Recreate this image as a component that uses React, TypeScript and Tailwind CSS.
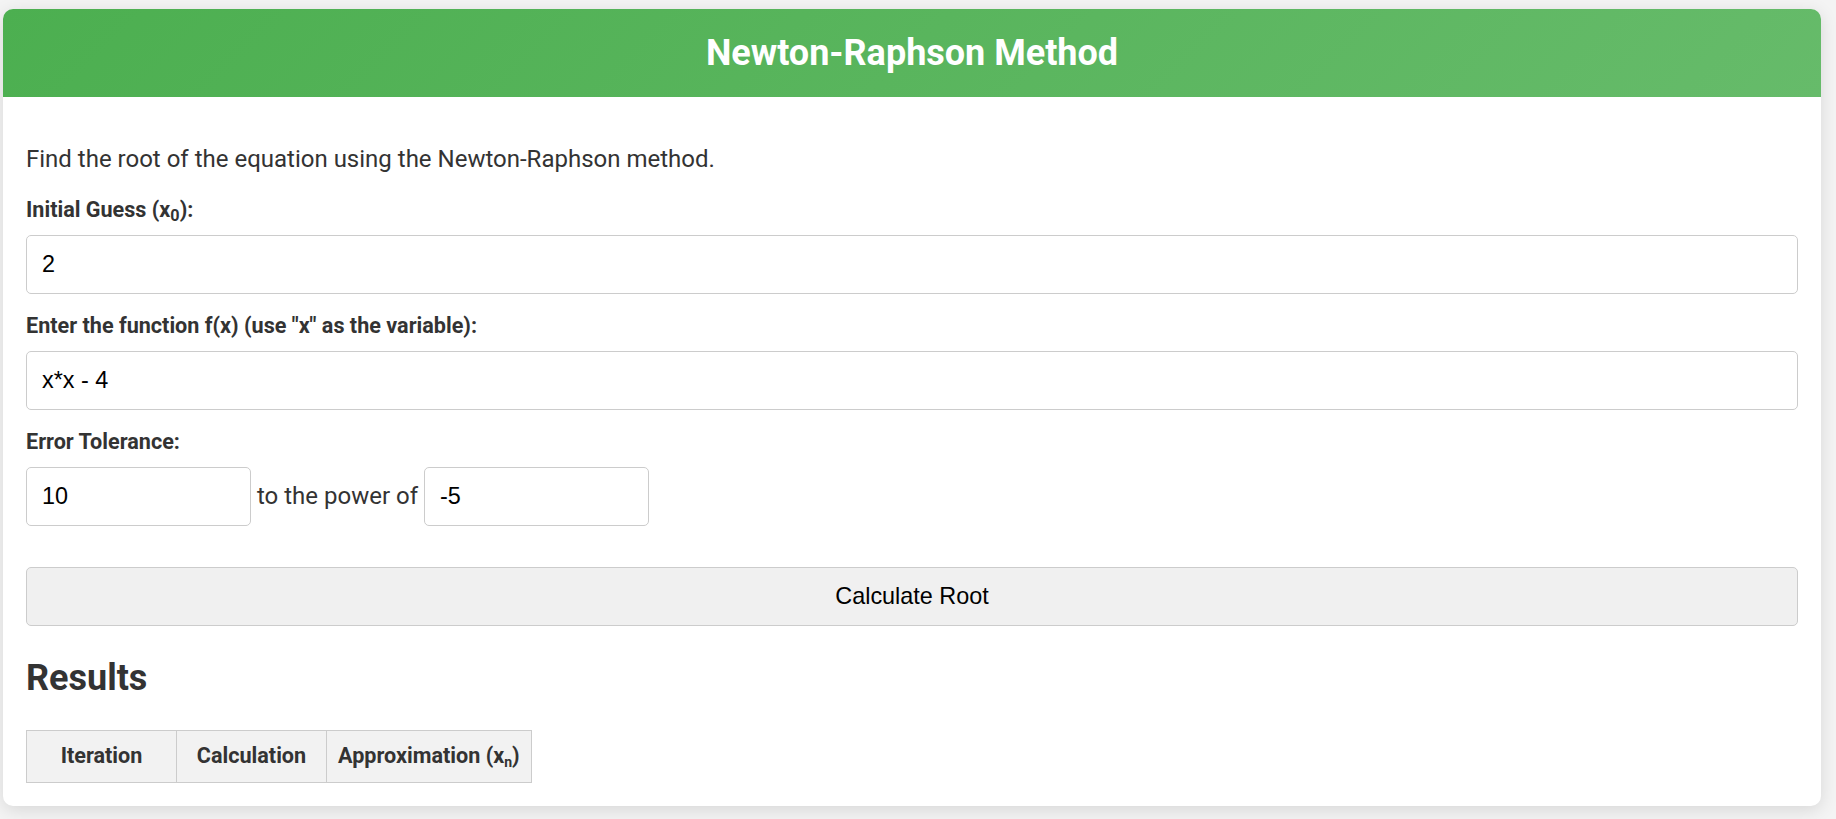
const fieldClass =
  "block w-full h-[58.5px] px-[15px] border border-[#cccccc] rounded-[5px] bg-white text-black text-[23.4px] font-['Liberation_Sans',Arial,sans-serif] outline-none";

const smallField =
  "w-[225px] h-[58.5px] px-[15px] border border-[#cccccc] rounded-[5px] bg-white text-black text-[23.4px] font-['Liberation_Sans',Arial,sans-serif] outline-none";

const labelClass = "block mb-[13px] text-[21.6px] leading-[25px] font-bold";

const App = () => {
  return (
    <div className="min-h-[819px] bg-[#f4f4f4] pl-[3px] pr-[15px] pt-[9px] pb-[13px] font-['Roboto','Liberation_Sans',sans-serif] text-[#333333]">
      <div className="w-full bg-white rounded-[10px] overflow-hidden shadow-[0_4px_18px_rgba(0,0,0,0.12)]">
        <div className="h-[88px] flex items-center justify-center bg-[linear-gradient(135deg,#4CAF50,#66BB6A)]">
          <h1 className="text-white font-bold text-[36px] leading-none">
            Newton-Raphson Method
          </h1>
        </div>

        <div className="px-[23px] pt-[49px] pb-[22.5px]">
          <p className="text-[24px] leading-[26px]">
            Find the root of the equation using the Newton-Raphson method.
          </p>

          <label className={`${labelClass} mt-[25px]`}>
            Initial Guess (x<sub>0</sub>):
          </label>
          <input className={fieldClass} type="text" defaultValue="2" />

          <label className={`${labelClass} mt-[19.5px]`}>
            Enter the function f(x) (use "x" as the variable):
          </label>
          <input className={fieldClass} type="text" defaultValue="x*x - 4" />

          <label className={`${labelClass} mt-[19.5px]`}>
            Error Tolerance:
          </label>
          <div className="flex items-center gap-[6px] text-[24px] leading-[58.5px]">
            <input className={smallField} type="text" defaultValue="10" />
            <span>to the power of</span>
            <input className={smallField} type="text" defaultValue="-5" />
          </div>

          <button className="mt-[41.5px] w-full h-[59px] bg-[#f0f0f0] border border-[#cccccc] rounded-[5px] text-black text-[23.4px] font-['Liberation_Sans',Arial,sans-serif]">
            Calculate Root
          </button>

          <h2 className="mt-[31px] text-[36px] leading-[42px] font-bold">
            Results
          </h2>

          <table className="mt-[30.5px] border-collapse">
            <thead>
              <tr className="bg-[#f2f2f2] text-[21.6px] font-bold">
                <th className="w-[150px] h-[52.5px] border border-[#cccccc] px-[11px]">
                  Iteration
                </th>
                <th className="w-[150px] h-[52.5px] border border-[#cccccc] px-[11px]">
                  Calculation
                </th>
                <th className="h-[52.5px] border border-[#cccccc] px-[11px]">
                  Approximation (x<sub className="text-[65%]">n</sub>)
                </th>
              </tr>
            </thead>
          </table>
        </div>
      </div>
    </div>
  );
};

export default App;
